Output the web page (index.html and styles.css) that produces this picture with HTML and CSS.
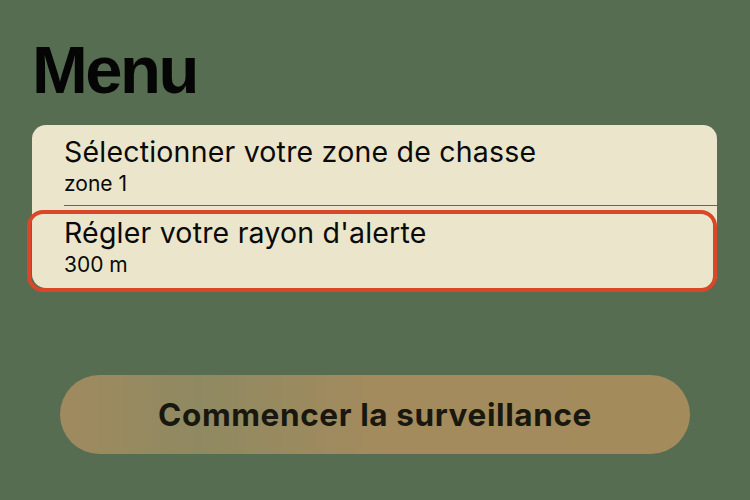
FILE: index.html
```html
<!DOCTYPE html>
<html lang="fr">
<head>
<meta charset="utf-8">
<title>Menu</title>
<link rel="stylesheet" href="styles.css">
</head>
<body>
<main class="screen">
  <h1 class="title">Menu</h1>
  <section class="card">
    <div class="row">
      <div class="row-title">Sélectionner votre zone de chasse</div>
      <div class="row-sub">zone 1</div>
    </div>
    <div class="divider"></div>
    <div class="row row-focused">
      <div class="row-title">Régler votre rayon d'alerte</div>
      <div class="row-sub">300 m</div>
      <div class="focus-ring"></div>
    </div>
  </section>
  <button class="start-btn" type="button">Commencer la surveillance</button>
</main>
</body>
</html>
```
FILE: styles.css
```css
html, body {
  margin: 0;
  padding: 0;
  background: #566d52;
}
body {
  width: 750px;
  height: 500px;
  overflow: hidden;
  font-family: "Inter", "Liberation Sans", sans-serif;
  color: #000;
}
.screen {
  display: flex;
  flex-direction: column;
  padding: 36px 0 0 0;
}
.title {
  margin: 0 0 22px 32px;
  font-family: "Liberation Sans", Arial, sans-serif;
  font-weight: 700;
  font-size: 67px;
  line-height: 67px;
  letter-spacing: -2.5px;
  color: #050505;
}
.card {
  margin-left: 32px;
  width: 685px;
  background: #ebe6cb;
  border-radius: 14px;
}
.row {
  position: relative;
  display: flex;
  flex-direction: column;
  padding: 9px 0 7px 32px;
}
.row-focused {
  padding: 9px 0 9px 32px;
}
.row-title {
  font-size: 28.5px;
  line-height: 36px;
  letter-spacing: 0.2px;
  font-weight: 400;
  color: #0a0a0a;
}
.row-sub {
  font-size: 21px;
  line-height: 28px;
  color: #0a0a0a;
}
.divider {
  height: 1px;
  margin-left: 32px;
  background: #5b6d53;
}
.focus-ring {
  position: absolute;
  left: -5px;
  right: 0;
  top: 4px;
  bottom: -4px;
  border: 4px solid #d9472b;
  border-radius: 16px;
  pointer-events: none;
}
.start-btn {
  margin: 87px 0 0 60px;
  width: 630px;
  height: 79px;
  border: none;
  border-radius: 40px;
  background: linear-gradient(90deg, #a08a5f 0%, #8f8961 22%, #a38b5d 50%, #a48b5c 100%);
  font-family: "Inter", "Liberation Sans", sans-serif;
  font-weight: 700;
  font-size: 31.5px;
  letter-spacing: 0.6px;
  color: #18180f;
  padding: 0;
}
```
